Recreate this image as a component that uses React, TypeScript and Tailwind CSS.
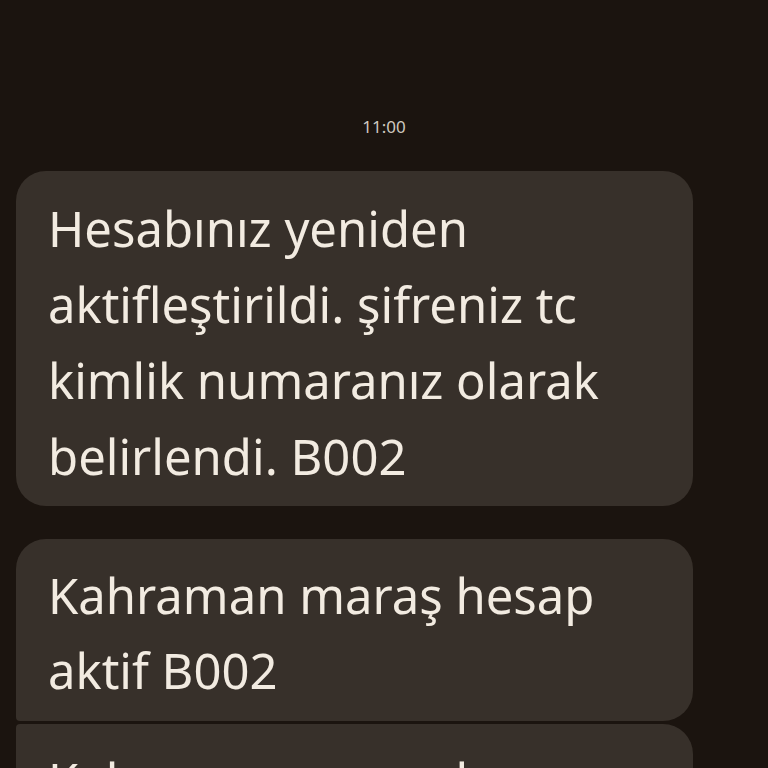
export default function App() {
  return (
    <div
      className="h-[768px] w-[768px] overflow-hidden bg-[#1b140f] text-[#f2ebe1]"
      style={{ fontFamily: '"Noto Sans", "Liberation Sans", sans-serif' }}
    >
      <div className="pt-[115px] text-center text-[17px] leading-[24px] text-[#cfc8bf]">11:00</div>
      <div className="mt-[32px] flex flex-col pl-4 pr-[75px]">
        <div className="rounded-[30px] bg-[#37302a] px-8 pb-[12px] pt-[19px]">
          <p className="text-[49px] leading-[76px]">
            Hesabınız yeniden aktifleştirildi. şifreniz tc kimlik numaranız olarak belirlendi. B002
          </p>
        </div>
        <div className="mt-[33px] rounded-[30px] rounded-bl-[4px] bg-[#37302a] px-8 pb-[13px] pt-[19px]">
          <p className="text-[49px] leading-[75px]">Kahraman maraş hesap aktif B002</p>
        </div>
        <div className="mt-[3px] rounded-[30px] rounded-tl-[4px] bg-[#37302a] px-8 pb-[13px] pt-[19px]">
          <p className="text-[49px] leading-[75px]">Kahraman maraş hesap aktif B002</p>
        </div>
      </div>
    </div>
  );
}
